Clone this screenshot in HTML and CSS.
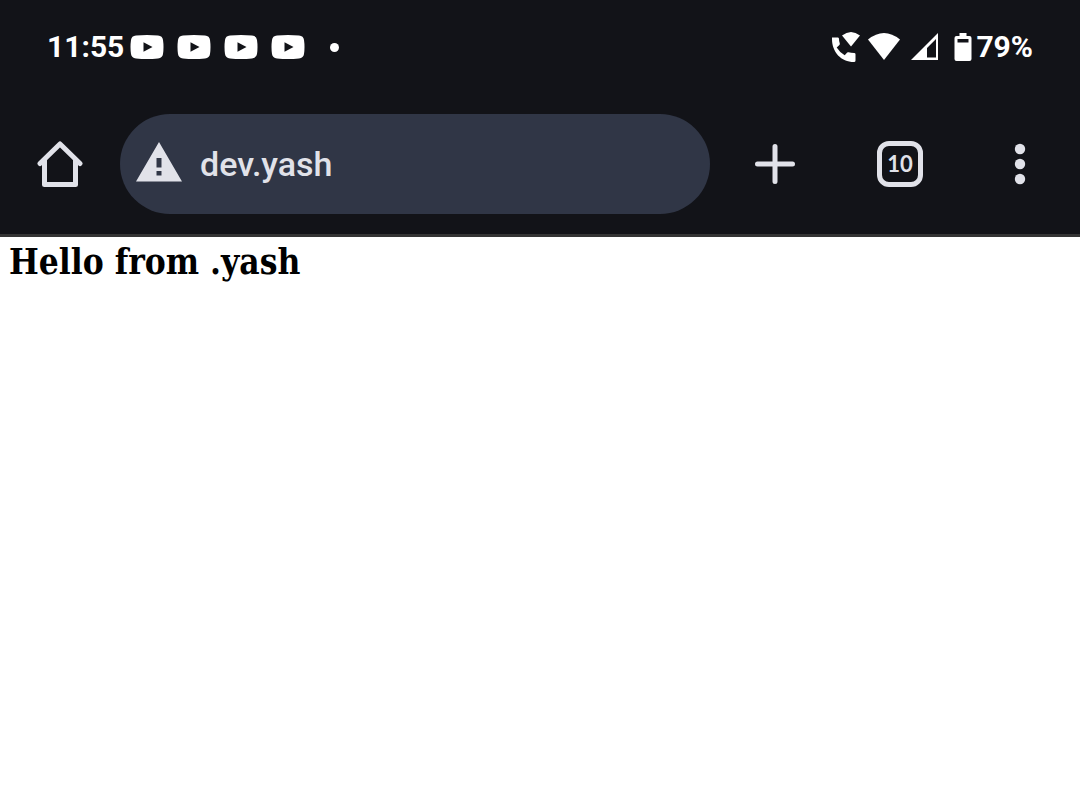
FILE: index.html
```html
<!DOCTYPE html>
<html lang="en">
<head>
<meta charset="utf-8">
<meta name="viewport" content="width=device-width, initial-scale=1">
<title>dev.yash</title>
<link rel="stylesheet" href="styles.css">
</head>
<body>
<svg class="sprite" aria-hidden="true">
  <symbol id="video" viewBox="0 0 34 24">
    <path fill="#fff" d="M6 .6Q17-.5 28 .6Q32.500 1 33 5Q34 12 33 19Q32.500 23 28 23.400Q17 24.500 6 23.400Q1.500 23 1 19Q0 12 1 5Q1.500 1 6 .6Z"/>
    <path fill="#121318" d="M13.500 7.300v9.400l9-4.700z"/>
  </symbol>
</svg>
<header class="chrome">
  <div class="status">
    <div class="status-left">
      <time class="clock">11:55</time>
      <div class="notices">
        <svg class="video"><use href="#video"/></svg>
        <svg class="video"><use href="#video"/></svg>
        <svg class="video"><use href="#video"/></svg>
        <svg class="video"><use href="#video"/></svg>
        <span class="dot"></span>
      </div>
    </div>
    <div class="status-right">
      <svg class="call" viewBox="0 0 28 30" fill="#fff">
        <path d="M0 5.500H6Q7 5.500 7 7Q7 9.500 7.800 11.500Q8 12.300 7.400 13L4.700 15.500Q7.800 20.500 12.700 23.300L15.200 20.500Q15.900 20 16.700 20.300Q18.900 21 22.200 21Q23.500 21 23.500 22.300V28.500Q23.500 30 22 30C9 30 0 20 0 7Z"/>
        <path d="M10 3.500Q19-3.500 28 3.500L19 14.500Z"/>
      </svg>
      <svg class="wifi" viewBox="0 0 32 28" fill="#fff"><path d="M0 6.500Q16-6.500 32 6.500L16 27Z"/></svg>
      <svg class="signal" viewBox="0 0 27 28"><path fill="#fff" fill-rule="evenodd" d="M27 0V27H0ZM25 6L16 15V24.500H25Z"/></svg>
      <div class="battery">
        <svg class="cell" viewBox="0 0 18 28"><path fill="#fff" fill-rule="evenodd" d="M5.500 0h7v3h3Q17.500 3 17.500 5v21Q17.500 28 15.500 28h-13Q.5 28 .5 26V5Q.5 3 2.500 3h3ZM3.500 6v3.500h11V6Z"/></svg>
        <span>79%</span>
      </div>
    </div>
  </div>
  <form class="toolbar">
    <button class="tool" type="button" aria-label="Home">
      <svg class="icon" viewBox="0 0 48 48" fill="none" stroke="#e1e2e9" stroke-width="5" stroke-linejoin="round" stroke-linecap="round"><path d="M8.500 20V44.500H39.500V20M4 23.500L24 4L44 23.500"/></svg>
    </button>
    <div class="address">
      <svg class="warning" viewBox="0 0 46 44"><path fill="#e1e2e9" fill-rule="evenodd" d="M23 0L46 39.500H0ZM20.500 16v9.500h5V16ZM20.500 29v4.500h5V29Z"/></svg>
      <input class="url" type="text" value="dev.yash" aria-label="Address">
    </div>
    <button class="tool tool-new" type="button" aria-label="New tab">
      <svg class="icon" viewBox="0 0 48 48" stroke="#e1e2e9" stroke-width="5" stroke-linecap="round"><path d="M24 6.500V41.500M6.500 24H41.500"/></svg>
    </button>
    <button class="tool" type="button" aria-label="Switch tabs"><span class="count">10</span></button>
    <button class="tool" type="button" aria-label="Menu">
      <svg class="icon" viewBox="0 0 48 48" fill="#e1e2e9"><circle cx="24" cy="9" r="5.200"/><circle cx="24" cy="24" r="5.200"/><circle cx="24" cy="39" r="5.200"/></svg>
    </button>
  </form>
</header>
<main class="page"><h1 class="greeting">Hello from .yash</h1></main>
</body>
</html>
```
FILE: styles.css
```css
* { box-sizing: border-box; }
body { margin: 0; background: #fff; font-family: Roboto, sans-serif; }
.sprite { display: none; }
.chrome { background: #121318; border-bottom: 3px solid #343434; }
.status {
  display: flex;
  justify-content: space-between;
  align-items: center;
  height: 94px;
  padding: 0 47px;
  color: #fff;
  font-size: 30px;
  font-weight: 700;
  line-height: 36px;
}
.status-left, .status-right, .notices, .battery { display: flex; align-items: center; }
.status-left { gap: 6px; }
.notices { gap: 13px; }
.video { width: 34px; height: 24px; }
.dot { width: 9px; height: 9px; margin-left: 12px; border-radius: 50%; background: #fff; }
.status-right { gap: 8px; }
.call { width: 28px; height: 30px; }
.wifi { width: 32px; height: 28px; }
.signal { width: 27px; height: 28px; margin: 0 8px 0 3px; }
.battery { gap: 4px; }
.cell { width: 18px; height: 28px; }
.toolbar { display: flex; align-items: center; height: 140px; margin: 0; }
.tool {
  display: flex;
  flex: none;
  justify-content: center;
  align-items: center;
  width: 120px;
  height: 100px;
  padding: 0;
  border: 0;
  background: none;
  color: #e1e2e9;
}
.tool-new { width: 130px; }
.icon { width: 48px; height: 48px; }
.address {
  display: flex;
  flex: 1;
  align-items: center;
  gap: 18px;
  min-width: 0;
  height: 100px;
  padding: 0 32px 0 16px;
  border-radius: 50px;
  background: #303646;
}
.warning { flex: none; width: 46px; height: 44px; }
.url {
  flex: 1;
  min-width: 0;
  padding: 0;
  border: 0;
  outline: 0;
  background: none;
  color: #e1e2e9;
  font: 500 34px/44px Roboto, sans-serif;
}
.count {
  width: 46px;
  height: 46px;
  border: 5px solid #e1e2e9;
  border-radius: 12px;
  font: 700 22px/36px Lato, sans-serif;
  text-align: center;
}
.page { padding: 4px 9px; }
.greeting {
  margin: 0;
  color: #000;
  font: 700 35px/42px "DejaVu Serif Condensed", "DejaVu Serif", serif;
}
```
